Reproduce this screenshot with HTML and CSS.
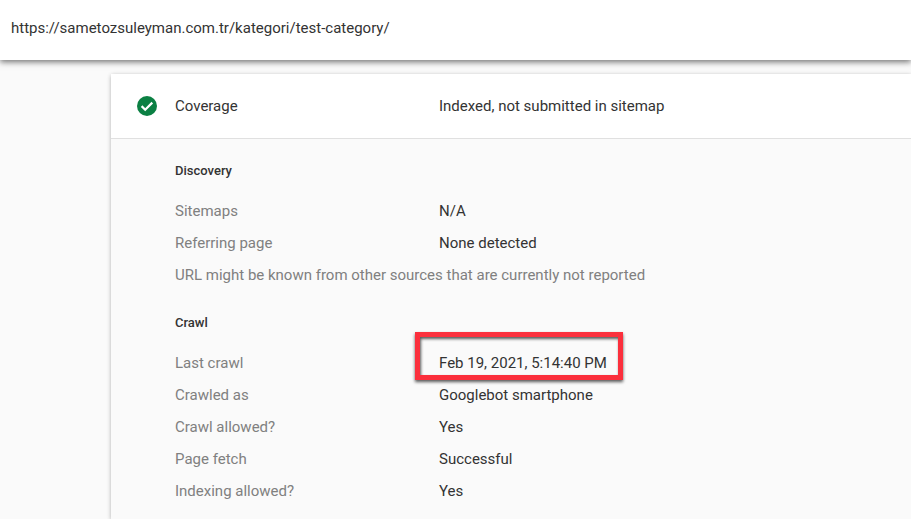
FILE: index.html
```html
<!DOCTYPE html>
<html>
<head>
  <title>URL Inspection</title>
  <link rel="stylesheet" href="styles.css">
</head>
<body>
  <div class="url-bar">https://sametozsuleyman.com.tr/kategori/test-category/</div>
  <div class="card">
    <div class="card-head">
      <svg class="status-icon" viewBox="0 0 20 20" width="20" height="20">
        <circle cx="10" cy="10" r="10" fill="#0b8043"/>
        <path d="M4.6 10.1l3.6 3.6 7.1-7.1" fill="none" stroke="#fff" stroke-width="2.2"/>
      </svg>
      <div class="head-label">Coverage</div>
      <div class="value">Indexed, not submitted in sitemap</div>
    </div>
    <div class="card-body">
      <h3 class="section-title">Discovery</h3>
      <div class="row"><div class="label">Sitemaps</div><div class="value">N/A</div></div>
      <div class="row"><div class="label">Referring page</div><div class="value">None detected</div></div>
      <div class="row"><div class="label">URL might be known from other sources that are currently not reported</div></div>

      <h3 class="section-title crawl">Crawl</h3>
      <div class="row"><div class="label">Last crawl</div><div class="value highlighted">Feb 19, 2021, 5:14:40 PM<span class="red-box"></span></div></div>
      <div class="row"><div class="label">Crawled as</div><div class="value">Googlebot smartphone</div></div>
      <div class="row"><div class="label">Crawl allowed?</div><div class="value">Yes</div></div>
      <div class="row"><div class="label">Page fetch</div><div class="value">Successful</div></div>
      <div class="row"><div class="label">Indexing allowed?</div><div class="value">Yes</div></div>
    </div>
  </div>
</body>
</html>
```

FILE: styles.css
```css
html, body {
  height: 100%;
}

body {
  margin: 0;
  overflow: hidden;
  background: #fafafa;
  color: #333;
  font-family: Roboto, sans-serif;
  font-size: 15px;
}

.url-bar {
  height: 60px;
  line-height: 56px;
  padding-left: 11px;
  background: #fff;
  box-shadow: 0 2px 6px rgba(0, 0, 0, 0.55);
  position: relative;
}

.card {
  height: 445px;
  margin: 14px 0 0 111px;
  background: #fafafa;
  border-radius: 2px 0 0 0;
  box-shadow: 0 1px 4px rgba(0, 0, 0, 0.3);
}

.card-head {
  display: flex;
  align-items: center;
  height: 64px;
  background: #fff;
  border-bottom: 1px solid #e0e0e0;
}

.status-icon {
  margin-left: 26px;
  margin-right: 18px;
}

.head-label {
  width: 264px;
}

.card-body {
  padding: 16px 0 0 64px;
}

.section-title {
  margin: 0;
  height: 32px;
  line-height: 32px;
  font-size: 13px;
  font-weight: 500;
}

.section-title.crawl {
  margin-top: 16px;
  margin-bottom: 8px;
}

.row {
  display: flex;
  height: 32px;
  line-height: 32px;
}

.section-title + .row {
  margin-top: 8px;
}

.label {
  width: 264px;
  flex-shrink: 0;
  white-space: nowrap;
  color: #808080;
}

.highlighted {
  position: relative;
}

.red-box {
  position: absolute;
  left: -24px;
  top: -15px;
  width: 198px;
  height: 38px;
  border: 5px solid #fb2f3c;
  box-shadow: 0 2px 3px rgba(0, 0, 0, 0.65), inset 1px 2px 3px rgba(0, 0, 0, 0.65);
}
```
